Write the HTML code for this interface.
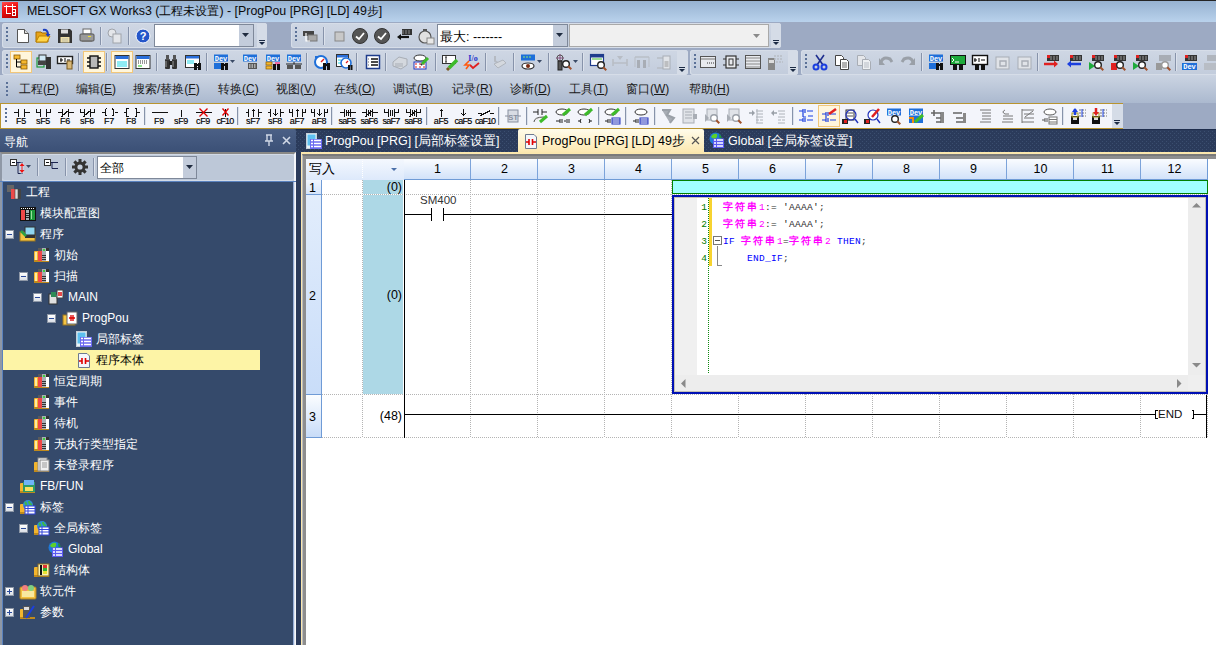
<!DOCTYPE html><html><head><meta charset="utf-8"><style>
*{margin:0;padding:0;box-sizing:border-box}
html,body{width:1216px;height:645px;overflow:hidden}
body{position:relative;background:#9DAAC3;font-family:"Liberation Sans",sans-serif;font-size:12px;color:#000}
.a{position:absolute}
.t{position:absolute;white-space:nowrap;line-height:1}
.band{position:absolute;border-radius:3px;background:linear-gradient(#CFD7E4,#C2CCDC);box-shadow:inset 0 0 0 1px #D6DDE8}
.grip{position:absolute;width:2px;height:14px;background:repeating-linear-gradient(#5B7197 0 2px,transparent 2px 4px)}
.sep{position:absolute;width:2px;height:18px;background:#8793AA;border-right:1px solid #DCE2EC}
.chev{position:absolute;width:10px;border-radius:0 3px 3px 0;background:#D5DCE7}
.chev:before{content:"";position:absolute;left:2px;bottom:7px;width:6px;height:1px;background:#1B2A44}.chev:after{content:"";position:absolute;left:2px;bottom:3px;width:0;height:0;border-left:3px solid transparent;border-right:3px solid transparent;border-top:3px solid #1B2A44}
.hl{position:absolute;width:22px;height:22px;background:#FFF6DC;border:1px solid #F2C77A}
svg{position:absolute;overflow:visible}
.dot{background-image:linear-gradient(90deg,#B4B4B4 50%,#fff 50%);background-size:2px 1px;height:1px}
.vdot{background-image:linear-gradient(#B4B4B4 50%,#fff 50%);background-size:1px 2px;width:1px}
</style></head><body>
<div class="a" style="left:0;top:0;width:1216px;height:22px;background:linear-gradient(#97B2D1,#B9D2EC);border-top:1px solid #252525"></div>
<div class="a" style="left:2px;top:2px;width:16px;height:16px;background:linear-gradient(160deg,#FF5050 0%,#F01010 40%,#B00000 100%);"></div>
<svg style="left:2px;top:2px" width="16" height="16" shape-rendering="crispEdges"><path d="M2 4.5h12M4.5 3v8h4M10.5 2v12M10.5 7.5h3v6h-3M10.5 10.5h3" stroke="#fff" stroke-width="1" fill="none"/></svg>
<div class="t" style="left:27px;top:5px;font-size:12.4px;color:#0A0A0A">MELSOFT GX Works3 (工程未设置) - [ProgPou [PRG] [LD] 49步]</div>
<div class="a" style="left:0;top:22px;width:1216px;height:81px;background:#9DAAC3"></div>
<div class="band" style="left:2px;top:23px;width:265px;height:25px"></div>
<div class="grip" style="left:6px;top:27px"></div>
<div class="band" style="left:291px;top:23px;width:490px;height:25px"></div>
<div class="grip" style="left:295px;top:27px"></div>
<div class="band" style="left:2px;top:50px;width:686px;height:25px"></div>
<div class="grip" style="left:6px;top:54px"></div>
<div class="band" style="left:690px;top:50px;width:108px;height:25px"></div>
<div class="grip" style="left:694px;top:54px"></div>
<div class="band" style="left:801px;top:50px;width:420px;height:25px"></div>
<div class="grip" style="left:805px;top:54px"></div>
<div class="chev" style="left:257px;top:23px;height:25px"></div>
<div class="chev" style="left:771px;top:23px;height:25px"></div>
<div class="chev" style="left:677px;top:50px;height:25px"></div>
<div class="chev" style="left:788px;top:50px;height:25px"></div>
<div class="a" style="left:154px;top:24px;width:100px;height:23px;background:#fff;border:1px solid #7E8899"></div>
<div class="a" style="left:239px;top:25px;width:14px;height:21px;background:#C3CCDB"></div>
<svg style="left:242px;top:33px" width="8" height="5"><path d="M0 0h7l-3.5 4z" fill="#1F2B3F"/></svg>
<div class="a" style="left:437px;top:24px;width:131px;height:23px;background:#fff;border:1px solid #7E8899"></div>
<div class="a" style="left:553px;top:25px;width:14px;height:21px;background:#C3CCDB"></div>
<svg style="left:556px;top:33px" width="8" height="5"><path d="M0 0h7l-3.5 4z" fill="#1F2B3F"/></svg>
<div class="t" style="left:440px;top:31px;font-size:12.5px">最大: -------</div>
<div class="a" style="left:569px;top:24px;width:200px;height:23px;background:#F0F0F0;border:1px solid #A9A9A9"></div>
<svg style="left:753px;top:34px" width="8" height="5"><path d="M0 0h7l-3.5 4z" fill="#8A8A8A"/></svg>
<div class="a" style="left:0;top:75px;width:1216px;height:28px;background:linear-gradient(#CBD4E2,#ABB9CF)"></div>
<div class="grip" style="left:6px;top:82px"></div>
<div class="t" style="left:19px;top:83px;font-size:12px;color:#1A1A1A">工程(<u>P</u>)</div>
<div class="t" style="left:76px;top:83px;font-size:12px;color:#1A1A1A">编辑(<u>E</u>)</div>
<div class="t" style="left:133px;top:83px;font-size:12px;color:#1A1A1A">搜索/替换(<u>F</u>)</div>
<div class="t" style="left:218px;top:83px;font-size:12px;color:#1A1A1A">转换(<u>C</u>)</div>
<div class="t" style="left:276px;top:83px;font-size:12px;color:#1A1A1A">视图(<u>V</u>)</div>
<div class="t" style="left:334px;top:83px;font-size:12px;color:#1A1A1A">在线(<u>O</u>)</div>
<div class="t" style="left:393px;top:83px;font-size:12px;color:#1A1A1A">调试(<u>B</u>)</div>
<div class="t" style="left:452px;top:83px;font-size:12px;color:#1A1A1A">记录(<u>R</u>)</div>
<div class="t" style="left:510px;top:83px;font-size:12px;color:#1A1A1A">诊断(<u>D</u>)</div>
<div class="t" style="left:569px;top:83px;font-size:12px;color:#1A1A1A">工具(<u>T</u>)</div>
<div class="t" style="left:626px;top:83px;font-size:12px;color:#1A1A1A">窗口(<u>W</u>)</div>
<div class="t" style="left:689px;top:83px;font-size:12px;color:#1A1A1A">帮助(<u>H</u>)</div>
<div class="a" style="left:0;top:103px;width:1123px;height:26px;background:#F3F5FB;border:1px solid #B89430"></div>
<div class="a" style="left:1112px;top:104px;width:11px;height:24px;background:#D5DCE7"></div>
<div class="chev" style="left:1112px;top:104px;height:24px;border-radius:0"></div>
<div class="grip" style="left:5px;top:108px"></div>
<svg style="left:15px;top:28px" width="16" height="16" viewBox="0 0 16 16"><path d="M2.5 1.5h7l4 4v9h-11z" fill="#fff" stroke="#555"/><path d="M9.5 1.5v4h4" fill="#ddd" stroke="#555"/></svg>
<svg style="left:35px;top:28px" width="16" height="16" viewBox="0 0 16 16"><path d="M1 4h5l1 1h6v9H1z" fill="#E8A317" stroke="#A66F00"/><path d="M1 14l3-6h11l-3 6z" fill="#FFD54A" stroke="#C08400"/><path d="M8 2q5-1 5 5" stroke="#1B3FBF" stroke-width="2" fill="none"/><path d="M10.5 6h5l-2.5 3z" fill="#1B3FBF"/></svg>
<svg style="left:57px;top:28px" width="16" height="16" viewBox="0 0 16 16"><path d="M1 1h12l2 2v12H1z" fill="#333"/><rect x="4" y="1.5" width="7" height="4" fill="#ddd"/><rect x="3.5" y="9" width="9" height="5.5" fill="#F0E0A8"/><path d="M5 11h6M5 13h6" stroke="#BBA"/></svg>
<svg style="left:79px;top:28px" width="16" height="16" viewBox="0 0 16 16"><rect x="4" y="1" width="8" height="5" fill="#fff" stroke="#666"/><rect x="1" y="6" width="14" height="7" rx="1" fill="#9A9A9A" stroke="#555"/><rect x="9" y="8" width="3" height="1" fill="#EEE030"/><rect x="3" y="12" width="10" height="2" fill="#777"/></svg>
<svg style="left:107px;top:28px" width="16" height="16" viewBox="0 0 16 16"><circle cx="5" cy="5" r="4" fill="#E4E6EA" stroke="#A0A4AA"/><rect x="6" y="6" width="8" height="9" fill="#E4E6EA" stroke="#A0A4AA"/></svg>
<svg style="left:135px;top:28px" width="16" height="16" viewBox="0 0 16 16"><circle cx="8" cy="8" r="7" fill="#2456C9" stroke="#fff" stroke-width="1"/><text x="8" y="12" font-family="Liberation Sans" font-size="11" font-weight="bold" fill="#fff" text-anchor="middle">?</text></svg>
<svg style="left:302px;top:28px" width="16" height="16" viewBox="0 0 16 16"><rect x="1" y="3" width="11" height="5" fill="#444"/><rect x="6" y="7" width="9" height="6" fill="#A8A8A8" stroke="#777"/><path d="M4 5v8h4" stroke="#fff" stroke-width="1.2" fill="none"/></svg>
<svg style="left:331px;top:28px" width="16" height="16" viewBox="0 0 16 16"><rect x="4" y="4" width="9" height="9" fill="#C8C8C8" stroke="#888"/></svg>
<svg style="left:352px;top:28px" width="16" height="16" viewBox="0 0 16 16"><circle cx="8" cy="8" r="7.5" fill="#555" stroke="#333"/><path d="M4 8.5l3 2.5 5-6" stroke="#fff" stroke-width="1.8" fill="none"/></svg>
<svg style="left:374px;top:28px" width="16" height="16" viewBox="0 0 16 16"><circle cx="8" cy="8" r="7.5" fill="#555" stroke="#333"/><path d="M4 8.5l3 2.5 5-6" stroke="#fff" stroke-width="1.8" fill="none"/></svg>
<svg style="left:396px;top:28px" width="16" height="16" viewBox="0 0 16 16"><rect x="6" y="1" width="10" height="6" fill="#333"/><path d="M7 2v4M10 2v4M13 2v4" stroke="#888"/><path d="M13 9H3" stroke="#111" stroke-width="2.2"/><path d="M1 9l4-3v6z" fill="#111"/></svg>
<svg style="left:418px;top:28px" width="16" height="16" viewBox="0 0 16 16"><circle cx="7" cy="9" r="6" fill="#E0E0E0" stroke="#555" stroke-width="1.2"/><rect x="5" y="1" width="4" height="2" fill="#555"/><rect x="9" y="10" width="7" height="6" fill="#E8E8E8" stroke="#888"/></svg>
<div class="sep" style="left:100px;top:27px"></div>
<div class="sep" style="left:128px;top:27px"></div>
<div class="sep" style="left:323px;top:27px"></div>
<div class="hl" style="left:10px;top:51px"></div>
<div class="hl" style="left:83px;top:51px"></div>
<div class="hl" style="left:111px;top:51px"></div>
<svg style="left:13px;top:54px" width="16" height="16" viewBox="0 0 16 16"><rect x="1" y="1" width="6" height="4" fill="#F5B82E" stroke="#8A5A00" stroke-width=".8"/><rect x="8" y="6" width="6" height="4" fill="#F5B82E" stroke="#8A5A00" stroke-width=".8"/><rect x="8" y="11" width="6" height="4" fill="#F5B82E" stroke="#8A5A00" stroke-width=".8"/><path d="M3.5 5v8H8M3.5 8H8" stroke="#000" fill="none"/></svg>
<svg style="left:36px;top:54px" width="16" height="16" viewBox="0 0 16 16"><rect x="1" y="4" width="7" height="9" fill="none" stroke="#1E9A3C" stroke-width="1.2"/><rect x="3" y="1" width="7" height="6" fill="#CFE8F5" stroke="#333"/><rect x="2" y="7" width="10" height="4" fill="#444"/><rect x="10" y="3" width="5" height="12" fill="#333"/></svg>
<svg style="left:57px;top:54px" width="16" height="16" viewBox="0 0 16 16"><rect x="0.5" y="2.5" width="15" height="7" fill="#fff" stroke="#222" stroke-width="1.4"/><path d="M3 6h3M4 4v4M8 4v4M10 6h3" stroke="#000"/><rect x="10" y="7" width="5" height="8" fill="#D8B878" stroke="#7A5A20"/></svg>
<svg style="left:86px;top:54px" width="16" height="16" viewBox="0 0 16 16"><rect x="4" y="2" width="8" height="12" fill="#B8B8B8" stroke="#111" stroke-width="1.4"/><path d="M1 4h3M1 8h3M1 12h3M12 4h3M12 8h3M12 12h3" stroke="#111" stroke-width="1.6"/></svg>
<svg style="left:114px;top:54px" width="16" height="16" viewBox="0 0 16 16"><rect x="1" y="1.5" width="14" height="13" fill="#fff" stroke="#333"/><rect x="1.5" y="2" width="13" height="3" fill="#2A6FDB"/><path d="M3 8h10M3 10h10M3 12h10" stroke="#20D8E8"/></svg>
<svg style="left:135px;top:54px" width="16" height="16" viewBox="0 0 16 16"><rect x="1" y="1.5" width="14" height="13" fill="#fff" stroke="#333"/><rect x="1.5" y="2" width="13" height="3" fill="#2A6FDB"/><path d="M3 7h10M3 9h10" stroke="#333" stroke-dasharray="1 1"/><path d="M3 12h4" stroke="#22CC22"/></svg>
<svg style="left:163px;top:54px" width="16" height="16" viewBox="0 0 16 16"><rect x="2" y="5" width="5" height="10" rx="1" fill="#333"/><rect x="9" y="5" width="5" height="10" rx="1" fill="#333"/><rect x="6" y="7" width="4" height="4" fill="#222"/><rect x="3" y="1" width="3" height="5" fill="#555"/><rect x="10" y="1" width="3" height="5" fill="#555"/><path d="M3 7v6M10 7v6" stroke="#999"/></svg>
<svg style="left:185px;top:54px" width="16" height="16" viewBox="0 0 16 16"><rect x="0.5" y="1.5" width="14" height="12" fill="#fff" stroke="#333"/><rect x="1" y="2" width="13" height="2.5" fill="#2A6FDB"/><path d="M2 7h7M2 9h7" stroke="#20D8E8"/><rect x="9" y="9" width="3" height="7" fill="#111"/><rect x="13" y="9" width="3" height="7" fill="#111"/><rect x="11" y="10" width="3" height="2" fill="#111"/></svg>
<svg style="left:213px;top:54px" width="16" height="16" viewBox="0 0 16 16"><rect x="1" y="0.5" width="14" height="7" fill="#1E6FD9"/><text x="8" y="6.6" font-family="Liberation Mono" font-size="7" font-weight="bold" fill="#fff" text-anchor="middle">Dev</text><rect x="1" y="9" width="7" height="6" fill="#1E6FD9"/><rect x="8" y="9" width="3" height="7" fill="#111"/><rect x="12" y="9" width="3" height="7" fill="#111"/><rect x="10" y="10" width="3" height="2" fill="#111"/></svg>
<svg style="left:242px;top:54px" width="16" height="16" viewBox="0 0 16 16"><rect x="1" y="0.5" width="14" height="7" fill="#1E6FD9"/><text x="8" y="6.6" font-family="Liberation Mono" font-size="7" font-weight="bold" fill="#fff" text-anchor="middle">Dev</text><rect x="6" y="9" width="9" height="6" fill="#555"/><path d="M7 11h7M7 13h7" stroke="#fff" stroke-dasharray="1.5 1"/></svg>
<svg style="left:265px;top:54px" width="16" height="16" viewBox="0 0 16 16"><rect x="1" y="0.5" width="14" height="7" fill="#1E6FD9"/><text x="8" y="6.6" font-family="Liberation Mono" font-size="7" font-weight="bold" fill="#fff" text-anchor="middle">Dev</text><rect x="1" y="8" width="6" height="3" fill="#F5B82E" stroke="#8A5A00" stroke-width=".7"/><rect x="1" y="12" width="6" height="3" fill="#F5B82E" stroke="#8A5A00" stroke-width=".7"/><rect x="10" y="8" width="5" height="3" fill="#F06AA0"/><rect x="8" y="10" width="3" height="6" fill="#111"/><rect x="12" y="10" width="3" height="6" fill="#111"/></svg>
<svg style="left:286px;top:54px" width="16" height="16" viewBox="0 0 16 16"><rect x="1" y="0.5" width="14" height="7" fill="#1E6FD9"/><text x="8" y="6.6" font-family="Liberation Mono" font-size="7" font-weight="bold" fill="#fff" text-anchor="middle">Dev</text><path d="M0 10h16M8 8v2" stroke="#222"/><rect x="1" y="11" width="6" height="4" fill="#555"/><rect x="9" y="11" width="6" height="4" fill="#555"/></svg>
<svg style="left:314px;top:54px" width="16" height="16" viewBox="0 0 16 16"><circle cx="7" cy="8" r="6" fill="#fff" stroke="#1E6FD9" stroke-width="2"/><path d="M7 8l3-3" stroke="#E02020" stroke-width="1.5"/><rect x="1" y="2" width="3" height="2" fill="#1E6FD9"/><rect x="9" y="9" width="3" height="7" fill="#111"/><rect x="13" y="9" width="3" height="7" fill="#111"/><rect x="11" y="10" width="3" height="2" fill="#111"/></svg>
<svg style="left:336px;top:54px" width="16" height="16" viewBox="0 0 16 16"><rect x="0.5" y="0.5" width="12" height="12" fill="#fff" stroke="#333"/><rect x="1" y="1" width="11" height="2.5" fill="#2A6FDB"/><path d="M2 6h3M2 9h3" stroke="#20D8E8"/><circle cx="10" cy="9" r="5" fill="#fff" stroke="#1E6FD9" stroke-width="1.6"/><path d="M10 9l2-2" stroke="#E02020" stroke-width="1.3"/><rect x="12" y="11" width="2" height="5" fill="#111"/><rect x="14.5" y="11" width="2" height="5" fill="#111"/></svg>
<svg style="left:365px;top:54px" width="16" height="16" viewBox="0 0 16 16"><rect x="1.5" y="1.5" width="13" height="13" fill="#fff" stroke="#1E3C8C" stroke-width="1.5"/><path d="M6 5h7M6 8h7M6 11h7" stroke="#111" stroke-width="1.4"/><path d="M3 5h1M3 8h1M3 11h1" stroke="#999" stroke-width="1.4"/></svg>
<svg style="left:392px;top:54px" width="16" height="16" viewBox="0 0 16 16"><path d="M1 8l6-5 8 2v6l-6 4-8-3z" fill="#D4D8DE" stroke="#A8ADB5"/><path d="M3 10h8M3 12h8" stroke="#A8ADB5"/></svg>
<svg style="left:413px;top:54px" width="16" height="16" viewBox="0 0 16 16"><ellipse cx="7" cy="4" rx="6" ry="3" fill="#fff" stroke="#333"/><rect x="1" y="8" width="12" height="7" fill="#fff" stroke="#2233BB"/><path d="M2 10h10M2 13h10" stroke="#E02020" stroke-dasharray="2 2"/><path d="M9 10l6-6" stroke="#3DBB2A" stroke-width="3"/><path d="M8 11l1-1" stroke="#333" stroke-width="2"/></svg>
<svg style="left:442px;top:54px" width="16" height="16" viewBox="0 0 16 16"><rect x="0.5" y="1.5" width="13" height="8" fill="#fff" stroke="#333"/><path d="M4 3v5M3 3h2M3 8h2" stroke="#333"/><path d="M7 14l8-8" stroke="#3DBB2A" stroke-width="3.5"/><path d="M5 16l2-2" stroke="#7A5A20" stroke-width="3"/></svg>
<svg style="left:464px;top:54px" width="16" height="16" viewBox="0 0 16 16"><text x="9" y="7" font-family="Liberation Serif" font-size="8" font-weight="bold" fill="#1B2FCC" text-anchor="middle">I/o</text><path d="M5 7l-4 4h4l-3 4" stroke="#FF5A10" stroke-width="1.6" fill="none"/><path d="M6 11l3 3 6-5" stroke="#E02020" stroke-width="1.8" fill="none"/></svg>
<svg style="left:491px;top:54px" width="16" height="16" viewBox="0 0 16 16"><path d="M4 2v5l3 2" stroke="#B5BAC2" stroke-width="2" fill="none"/><path d="M3 10l4 4 8-5-3-3z" fill="#D4D8DE" stroke="#B0B5BD"/></svg>
<svg style="left:520px;top:54px" width="16" height="16" viewBox="0 0 16 16"><rect x="1" y="0.5" width="14" height="6" fill="#1E6FD9"/><path d="M3 3h8" stroke="#8FE870" stroke-dasharray="2 1"/><ellipse cx="8" cy="12" rx="6" ry="3" fill="#fff" stroke="#333" stroke-width="1.2"/><circle cx="8" cy="12" r="2" fill="#7A2A10"/></svg>
<svg style="left:555px;top:54px" width="16" height="16" viewBox="0 0 16 16"><circle cx="5" cy="4" r="3" fill="none" stroke="#555"/><path d="M1 4h8M5 0v8" stroke="#7A3A6A" stroke-width=".8"/><rect x="3" y="7" width="4" height="9" fill="#555" stroke="#222"/><circle cx="11" cy="10" r="3.3" fill="#fff" stroke="#222" stroke-width="1.4"/><path d="M13.3 12.3l3 3" stroke="#A0522D" stroke-width="2"/></svg>
<svg style="left:590px;top:54px" width="16" height="16" viewBox="0 0 16 16"><rect x="0.5" y="0.5" width="13" height="11" fill="#fff" stroke="#1E3C8C" stroke-width="1.2"/><rect x="1" y="1" width="12" height="2.5" fill="#1E3C8C"/><path d="M2 5h10" stroke="#3DBB2A"/><circle cx="11" cy="11" r="3.3" fill="#fff" stroke="#222" stroke-width="1.4"/><path d="M13.3 13.3l3 3" stroke="#A0522D" stroke-width="2"/></svg>
<svg style="left:612px;top:54px" width="16" height="16" viewBox="0 0 16 16"><path d="M1 5v7M15 5v7M1 9h14" stroke="#B8BDC5" stroke-width="1.6"/><path d="M5 2h6l-3 4z" fill="#B8BDC5"/></svg>
<svg style="left:634px;top:54px" width="16" height="16" viewBox="0 0 16 16"><path d="M1 3h14" stroke="#B8BDC5" stroke-width="1.4"/><rect x="3" y="6" width="3" height="8" fill="#A8ADB5"/><rect x="9" y="6" width="3" height="8" fill="#A8ADB5"/><path d="M1 3v10M15 3v10" stroke="#B8BDC5"/></svg>
<svg style="left:656px;top:54px" width="16" height="16" viewBox="0 0 16 16"><path d="M1 4h7v10H1" fill="none" stroke="#B8BDC5" stroke-width="1.4"/><rect x="7" y="2" width="7" height="13" fill="#E0E3E8" stroke="#A8ADB5"/><path d="M8.5 8h4M8.5 10h4M8.5 12h4" stroke="#999"/></svg>
<svg style="left:700px;top:54px" width="16" height="16" viewBox="0 0 16 16"><rect x="0.5" y="2.5" width="15" height="11" fill="#E8EAEE" stroke="#555"/><path d="M1 5h14" stroke="#777"/><path d="M7 9h7" stroke="#333" stroke-dasharray="1 1"/></svg>
<svg style="left:723px;top:54px" width="16" height="16" viewBox="0 0 16 16"><path d="M0 5h3M0 11h3M13 5h3M13 11h3" stroke="#333" stroke-width="1.2"/><rect x="3" y="2" width="10" height="12" fill="#E8EAEE" stroke="#333" stroke-width="1.2"/><rect x="6" y="5" width="4" height="6" fill="none" stroke="#333"/></svg>
<svg style="left:745px;top:54px" width="16" height="16" viewBox="0 0 16 16"><rect x="0.5" y="1.5" width="15" height="13" fill="#E8EAEE" stroke="#555"/><path d="M1 4h14M1 7h14M1 10h14M1 13h14" stroke="#888"/></svg>
<svg style="left:767px;top:54px" width="16" height="16" viewBox="0 0 16 16"><rect x="1" y="4" width="7" height="12" fill="#888"/><rect x="2" y="6" width="5" height="3" fill="#ddd"/><path d="M7 2h9M7 5h9M9 8h7" stroke="#B8BDC5" stroke-dasharray="2 1" stroke-width="1.4"/></svg>
<svg style="left:812px;top:54px" width="16" height="16" viewBox="0 0 16 16"><path d="M4 1l7 10M12 1L5 11" stroke="#1F2F8F" stroke-width="1.6"/><circle cx="4" cy="13" r="2.5" fill="none" stroke="#1B3FDF" stroke-width="2"/><circle cx="12" cy="13" r="2.5" fill="none" stroke="#1B3FDF" stroke-width="2"/></svg>
<svg style="left:834px;top:54px" width="16" height="16" viewBox="0 0 16 16"><path d="M1.5 1.5h6l2 2v8h-8z" fill="#fff" stroke="#444"/><path d="M6.5 5.5h6l2 2v8h-8z" fill="#fff" stroke="#444"/><path d="M8 9h5M8 11h5M8 13h5" stroke="#666"/></svg>
<svg style="left:856px;top:54px" width="16" height="16" viewBox="0 0 16 16"><path d="M1.5 1.5h6l2 2v8h-8z" fill="#E4E6EA" stroke="#A8ADB5"/><path d="M6.5 5.5h6l2 2v8h-8z" fill="#EEF0F3" stroke="#A8ADB5"/><path d="M8 9h5M8 11h5M8 13h5" stroke="#B8BDC5"/></svg>
<svg style="left:878px;top:54px" width="16" height="16" viewBox="0 0 16 16"><path d="M3 8q2-6 9-3l2 3" stroke="#9AA0A8" stroke-width="3" fill="none"/><path d="M1 4v7h6z" fill="#9AA0A8"/></svg>
<svg style="left:900px;top:54px" width="16" height="16" viewBox="0 0 16 16"><path d="M13 8q-2-6-9-3l-2 3" stroke="#9AA0A8" stroke-width="3" fill="none"/><path d="M15 4v7H9z" fill="#9AA0A8"/></svg>
<svg style="left:928px;top:54px" width="16" height="16" viewBox="0 0 16 16"><rect x="1" y="0.5" width="14" height="7" fill="#1E6FD9"/><text x="8" y="6.6" font-family="Liberation Mono" font-size="7" font-weight="bold" fill="#fff" text-anchor="middle">Dev</text><rect x="1" y="9" width="7" height="6" fill="#1E6FD9"/><rect x="8" y="9" width="3" height="7" fill="#111"/><rect x="12" y="9" width="3" height="7" fill="#111"/><rect x="10" y="10" width="3" height="2" fill="#111"/></svg>
<svg style="left:950px;top:54px" width="16" height="16" viewBox="0 0 16 16"><rect x="0.5" y="1.5" width="15" height="9" fill="#1EAA3C" stroke="#111"/><path d="M2 4l2 2-2 2M5 8h4" stroke="#fff" fill="none"/><rect x="3" y="10" width="4" height="6" fill="#111"/><rect x="9" y="10" width="4" height="6" fill="#111"/></svg>
<svg style="left:972px;top:54px" width="16" height="16" viewBox="0 0 16 16"><rect x="0.5" y="1.5" width="15" height="9" fill="#fff" stroke="#111" stroke-width="1.4"/><path d="M2 6h3M3 4v4M7 4v4M9 6h4" stroke="#000"/><rect x="3" y="10" width="4" height="6" fill="#111"/><rect x="9" y="10" width="4" height="6" fill="#111"/></svg>
<svg style="left:995px;top:54px" width="16" height="16" viewBox="0 0 16 16"><rect x="1" y="3" width="13" height="12" fill="#E0E3E8" stroke="#A8ADB5"/><path d="M5 7h6v5H5z" fill="none" stroke="#A8ADB5" stroke-width="1.4"/></svg>
<svg style="left:1017px;top:54px" width="16" height="16" viewBox="0 0 16 16"><rect x="1" y="3" width="13" height="12" fill="#E0E3E8" stroke="#A8ADB5"/><path d="M5 7h6v5H5z" fill="none" stroke="#A8ADB5" stroke-width="1.4"/></svg>
<svg style="left:1043px;top:54px" width="16" height="16" viewBox="0 0 16 16"><rect x="4" y="1" width="12" height="6" fill="#333"/><path d="M8 2v4M11 2v4M14 2v4" stroke="#999"/><rect x="4" y="1" width="3" height="3" fill="#E02020"/><path d="M1 10h11" stroke="#E02020" stroke-width="2.5"/><path d="M15 10l-4-3.5v7z" fill="#E02020"/></svg>
<svg style="left:1066px;top:54px" width="16" height="16" viewBox="0 0 16 16"><rect x="4" y="1" width="12" height="6" fill="#333"/><path d="M8 2v4M11 2v4M14 2v4" stroke="#999"/><rect x="4" y="1" width="3" height="3" fill="#E02020"/><path d="M4 10h11" stroke="#1B3FDF" stroke-width="2.5"/><path d="M1 10l4-3.5v7z" fill="#1B3FDF"/></svg>
<svg style="left:1088px;top:54px" width="16" height="16" viewBox="0 0 16 16"><rect x="4" y="1" width="12" height="6" fill="#333"/><path d="M8 2v4M11 2v4M14 2v4" stroke="#999"/><rect x="4" y="1" width="3" height="3" fill="#E02020"/><path d="M1 8v8l6-4z" fill="#1EAA3C"/><circle cx="10" cy="11" r="3.3" fill="#fff" stroke="#222" stroke-width="1.4"/><path d="M12.3 13.3l3 3" stroke="#A0522D" stroke-width="2"/></svg>
<svg style="left:1110px;top:54px" width="16" height="16" viewBox="0 0 16 16"><rect x="4" y="1" width="12" height="6" fill="#333"/><path d="M8 2v4M11 2v4M14 2v4" stroke="#999"/><rect x="4" y="1" width="3" height="3" fill="#E02020"/><rect x="1" y="9" width="6" height="7" fill="#E02020"/><circle cx="10" cy="11" r="3.3" fill="#fff" stroke="#222" stroke-width="1.4"/><path d="M12.3 13.3l3 3" stroke="#A0522D" stroke-width="2"/></svg>
<svg style="left:1132px;top:54px" width="16" height="16" viewBox="0 0 16 16"><rect x="4" y="1" width="12" height="6" fill="#333"/><path d="M8 2v4M11 2v4M14 2v4" stroke="#999"/><rect x="4" y="1" width="3" height="3" fill="#E02020"/><path d="M1 8v8l6-4z" fill="#1EAA3C"/><circle cx="10" cy="11" r="3.3" fill="#fff" stroke="#222" stroke-width="1.4"/><path d="M12.3 13.3l3 3" stroke="#A0522D" stroke-width="2"/></svg>
<svg style="left:1155px;top:54px" width="16" height="16" viewBox="0 0 16 16"><rect x="4" y="1" width="12" height="6" fill="#A8ADB5"/><rect x="1" y="9" width="6" height="7" fill="#999"/><circle cx="10" cy="11" r="3.3" fill="#fff" stroke="#999" stroke-width="1.4"/><path d="M12.3 13.3l3 3" stroke="#A0522D" stroke-width="2"/></svg>
<svg style="left:1181px;top:54px" width="16" height="16" viewBox="0 0 16 16"><rect x="4" y="1" width="12" height="6" fill="#333"/><path d="M8 2v4M11 2v4M14 2v4" stroke="#999"/><rect x="4" y="1" width="3" height="3" fill="#E02020"/><rect x="1" y="9" width="15" height="7" fill="#1E6FD9"/><text x="8.5" y="15" font-family="Liberation Mono" font-size="7" font-weight="bold" fill="#fff" text-anchor="middle">Dev</text></svg>
<svg style="left:1203px;top:54px" width="16" height="16" viewBox="0 0 16 16"><rect x="4" y="1" width="12" height="6" fill="#B0B5BD"/><rect x="1" y="9" width="15" height="7" fill="#B8BDC5"/></svg>
<svg style="left:230px;top:60px" width="6" height="4"><path d="M0 0h5l-2.5 3z" fill="#3A4A66"/></svg>
<svg style="left:537px;top:60px" width="6" height="4"><path d="M0 0h5l-2.5 3z" fill="#3A4A66"/></svg>
<svg style="left:573px;top:60px" width="6" height="4"><path d="M0 0h5l-2.5 3z" fill="#3A4A66"/></svg>
<div class="sep" style="left:78px;top:53px"></div>
<div class="sep" style="left:106px;top:53px"></div>
<div class="sep" style="left:156px;top:53px"></div>
<div class="sep" style="left:206px;top:53px"></div>
<div class="sep" style="left:306px;top:53px"></div>
<div class="sep" style="left:356px;top:53px"></div>
<div class="sep" style="left:385px;top:53px"></div>
<div class="sep" style="left:435px;top:53px"></div>
<div class="sep" style="left:485px;top:53px"></div>
<div class="sep" style="left:513px;top:53px"></div>
<div class="sep" style="left:548px;top:53px"></div>
<div class="sep" style="left:582px;top:53px"></div>
<div class="sep" style="left:921px;top:53px"></div>
<div class="sep" style="left:1037px;top:53px"></div>
<div class="sep" style="left:1175px;top:53px"></div>
<svg style="left:13px;top:108px" width="17" height="9" viewBox="-0.5 -0.5 17 9" shape-rendering="crispEdges"><path d="M0 4h5M5 0v8M11 0v8M11 4h5" stroke="#111" stroke-width="1" fill="none"/></svg>
<div class="t" style="left:9px;top:117px;width:24px;text-align:center;font-size:9px;color:#000;letter-spacing:-.3px;-webkit-text-stroke:.15px #000">F5</div>
<svg style="left:35px;top:108px" width="17" height="9" viewBox="-0.5 -0.5 17 9" shape-rendering="crispEdges"><path d="M1 0v4h4M5 0v8M11 0v8M11 4h4v-4" stroke="#111" stroke-width="1" fill="none"/></svg>
<div class="t" style="left:31px;top:117px;width:24px;text-align:center;font-size:9px;color:#000;letter-spacing:-.3px;-webkit-text-stroke:.15px #000">sF5</div>
<svg style="left:57px;top:108px" width="17" height="9" viewBox="-0.5 -0.5 17 9" shape-rendering="crispEdges"><path d="M0 4h5M5 0v8M11 0v8M11 4h5M4 8l8-7" stroke="#111" stroke-width="1" fill="none"/></svg>
<div class="t" style="left:53px;top:117px;width:24px;text-align:center;font-size:9px;color:#000;letter-spacing:-.3px;-webkit-text-stroke:.15px #000">F6</div>
<svg style="left:79px;top:108px" width="17" height="9" viewBox="-0.5 -0.5 17 9" shape-rendering="crispEdges"><path d="M1 0v4h4M5 0v8M11 0v8M11 4h4v-4M4 8l8-7" stroke="#111" stroke-width="1" fill="none"/></svg>
<div class="t" style="left:75px;top:117px;width:24px;text-align:center;font-size:9px;color:#000;letter-spacing:-.3px;-webkit-text-stroke:.15px #000">sF6</div>
<svg style="left:101px;top:108px" width="17" height="9" viewBox="-0.5 -0.5 17 9" shape-rendering="crispEdges"><path d="M0 4h3M13 4h3M5 0q-3 4 0 8M11 0q3 4 0 8" stroke="#111" stroke-width="1" fill="none"/></svg>
<div class="t" style="left:97px;top:117px;width:24px;text-align:center;font-size:9px;color:#000;letter-spacing:-.3px;-webkit-text-stroke:.15px #000">F7</div>
<svg style="left:123px;top:108px" width="17" height="9" viewBox="-0.5 -0.5 17 9" shape-rendering="crispEdges"><path d="M0 4h3M13 4h3M5 0h-2v8h2M11 0h2v8h-2" stroke="#111" stroke-width="1" fill="none"/></svg>
<div class="t" style="left:119px;top:117px;width:24px;text-align:center;font-size:9px;color:#000;letter-spacing:-.3px;-webkit-text-stroke:.15px #000">F8</div>
<svg style="left:151px;top:108px" width="17" height="9" viewBox="-0.5 -0.5 17 9" shape-rendering="crispEdges"><path d="M0 4h16" stroke="#111" stroke-width="1" fill="none"/></svg>
<div class="t" style="left:147px;top:117px;width:24px;text-align:center;font-size:9px;color:#000;letter-spacing:-.3px;-webkit-text-stroke:.15px #000">F9</div>
<svg style="left:173px;top:108px" width="17" height="9" viewBox="-0.5 -0.5 17 9" shape-rendering="crispEdges"><path d="M8 1v7" stroke="#111" stroke-width="1" fill="none"/></svg>
<div class="t" style="left:169px;top:117px;width:24px;text-align:center;font-size:9px;color:#000;letter-spacing:-.3px;-webkit-text-stroke:.15px #000">sF9</div>
<svg style="left:195px;top:108px" width="17" height="9" viewBox="-0.5 -0.5 17 9" shape-rendering="crispEdges"><path d="M0 4h16" stroke="#111" stroke-width="1" fill="none"/><path d="M4 0l8 8M12 0L4 8" stroke="#E00000" stroke-width="1.3" shape-rendering="auto"/></svg>
<div class="t" style="left:191px;top:117px;width:24px;text-align:center;font-size:9px;color:#000;letter-spacing:-.3px;-webkit-text-stroke:.15px #000">cF9</div>
<svg style="left:217px;top:108px" width="17" height="9" viewBox="-0.5 -0.5 17 9" shape-rendering="crispEdges"><path d="M8 0v8" stroke="#111" stroke-width="1" fill="none"/><path d="M5 0l6 7M11 0L5 7" stroke="#E00000" stroke-width="1.3" shape-rendering="auto"/></svg>
<div class="t" style="left:213px;top:117px;width:24px;text-align:center;font-size:9px;color:#000;letter-spacing:-.7px;-webkit-text-stroke:.15px #000">cF10</div>
<svg style="left:245px;top:108px" width="17" height="9" viewBox="-0.5 -0.5 17 9" shape-rendering="crispEdges"><path d="M0 4h3M3 0v8M13 0v8M13 4h3M8 8V1M6 3l2-2 2 2" stroke="#111" stroke-width="1" fill="none"/></svg>
<div class="t" style="left:241px;top:117px;width:24px;text-align:center;font-size:9px;color:#000;letter-spacing:-.3px;-webkit-text-stroke:.15px #000">sF7</div>
<svg style="left:267px;top:108px" width="17" height="9" viewBox="-0.5 -0.5 17 9" shape-rendering="crispEdges"><path d="M0 4h3M3 0v8M13 0v8M13 4h3M8 0v7M6 5l2 2 2-2" stroke="#111" stroke-width="1" fill="none"/></svg>
<div class="t" style="left:263px;top:117px;width:24px;text-align:center;font-size:9px;color:#000;letter-spacing:-.3px;-webkit-text-stroke:.15px #000">sF8</div>
<svg style="left:289px;top:108px" width="17" height="9" viewBox="-0.5 -0.5 17 9" shape-rendering="crispEdges"><path d="M0 0v4h3M3 0v8M13 0v8M13 4h3v-4M8 8V1M6 3l2-2 2 2" stroke="#111" stroke-width="1" fill="none"/></svg>
<div class="t" style="left:285px;top:117px;width:24px;text-align:center;font-size:9px;color:#000;letter-spacing:-.3px;-webkit-text-stroke:.15px #000">aF7</div>
<svg style="left:311px;top:108px" width="17" height="9" viewBox="-0.5 -0.5 17 9" shape-rendering="crispEdges"><path d="M0 0v4h3M3 0v8M13 0v8M13 4h3v-4M8 0v7M6 5l2 2 2-2" stroke="#111" stroke-width="1" fill="none"/></svg>
<div class="t" style="left:307px;top:117px;width:24px;text-align:center;font-size:9px;color:#000;letter-spacing:-.3px;-webkit-text-stroke:.15px #000">aF8</div>
<svg style="left:339px;top:108px" width="17" height="9" viewBox="-0.5 -0.5 17 9" shape-rendering="crispEdges"><path d="M0 4h5M5 0v8M11 0v8M11 4h5M7 1v6M9 1v6M6 4h4" stroke="#111" stroke-width="1" fill="none"/></svg>
<div class="t" style="left:335px;top:117px;width:24px;text-align:center;font-size:9px;color:#000;letter-spacing:-.7px;-webkit-text-stroke:.15px #000">saF5</div>
<svg style="left:361px;top:108px" width="17" height="9" viewBox="-0.5 -0.5 17 9" shape-rendering="crispEdges"><path d="M0 4h5M5 0v8M11 0v8M11 4h5M7 1v6M9 1v6M4 8l8-7" stroke="#111" stroke-width="1" fill="none"/></svg>
<div class="t" style="left:357px;top:117px;width:24px;text-align:center;font-size:9px;color:#000;letter-spacing:-.7px;-webkit-text-stroke:.15px #000">saF6</div>
<svg style="left:383px;top:108px" width="17" height="9" viewBox="-0.5 -0.5 17 9" shape-rendering="crispEdges"><path d="M1 0v4h4M5 0v8M11 0v8M11 4h4v-4M7 1v6M9 1v6" stroke="#111" stroke-width="1" fill="none"/></svg>
<div class="t" style="left:379px;top:117px;width:24px;text-align:center;font-size:9px;color:#000;letter-spacing:-.7px;-webkit-text-stroke:.15px #000">saF7</div>
<svg style="left:405px;top:108px" width="17" height="9" viewBox="-0.5 -0.5 17 9" shape-rendering="crispEdges"><path d="M1 0v4h4M5 0v8M11 0v8M11 4h4v-4M7 1v6M9 1v6M4 8l8-7" stroke="#111" stroke-width="1" fill="none"/></svg>
<div class="t" style="left:401px;top:117px;width:24px;text-align:center;font-size:9px;color:#000;letter-spacing:-.7px;-webkit-text-stroke:.15px #000">saF8</div>
<svg style="left:433px;top:108px" width="17" height="9" viewBox="-0.5 -0.5 17 9" shape-rendering="crispEdges"><path d="M8 8V1M6 3l2-2 2 2" stroke="#111" stroke-width="1" fill="none"/></svg>
<div class="t" style="left:429px;top:117px;width:24px;text-align:center;font-size:9px;color:#000;letter-spacing:-.3px;-webkit-text-stroke:.15px #000">aF5</div>
<svg style="left:455px;top:108px" width="17" height="9" viewBox="-0.5 -0.5 17 9" shape-rendering="crispEdges"><path d="M8 0v7M6 5l2 2 2-2" stroke="#111" stroke-width="1" fill="none"/></svg>
<div class="t" style="left:451px;top:117px;width:24px;text-align:center;font-size:9px;color:#000;letter-spacing:-.7px;-webkit-text-stroke:.15px #000">caF5</div>
<svg style="left:477px;top:108px" width="17" height="9" viewBox="-0.5 -0.5 17 9" shape-rendering="crispEdges"><path d="M0 5h4M12 5h4M3 7l10-5" stroke="#111" stroke-width="1" fill="none"/></svg>
<div class="t" style="left:473px;top:117px;width:24px;text-align:center;font-size:9px;color:#000;letter-spacing:-1px;-webkit-text-stroke:.15px #000">caF10</div>
<div class="sep" style="left:144px;top:107px"></div>
<div class="sep" style="left:237px;top:107px"></div>
<div class="sep" style="left:331px;top:107px"></div>
<div class="sep" style="left:426px;top:107px"></div>
<div class="sep" style="left:498px;top:107px"></div>
<div class="sep" style="left:526px;top:107px"></div>
<div class="sep" style="left:598px;top:107px"></div>
<div class="sep" style="left:625px;top:107px"></div>
<div class="sep" style="left:654px;top:107px"></div>
<div class="sep" style="left:792px;top:107px"></div>
<div class="sep" style="left:1062px;top:107px"></div>
<div class="hl" style="left:818px;top:105px"></div>
<svg style="left:505px;top:108px" width="16" height="16" viewBox="0 0 16 16"><rect x="3" y="2" width="10" height="12" fill="#D8DCE4" stroke="#8890A0"/><path d="M0 8h3M13 8h3" stroke="#8890A0"/><text x="8" y="12" font-family="Liberation Sans" font-size="8" font-weight="bold" fill="#8890A0" text-anchor="middle">ST</text></svg>
<svg style="left:532px;top:108px" width="16" height="16" viewBox="0 0 16 16"><path d="M1 4h5M6 1v6M10 1v6M10 4h5" stroke="#222"/><path d="M2 14q0-5 10-5" stroke="#555" fill="#EEE"/><path d="M8 14l7-6" stroke="#3DBB2A" stroke-width="3"/></svg>
<svg style="left:555px;top:108px" width="16" height="16" viewBox="0 0 16 16"><ellipse cx="7" cy="4" rx="6" ry="3" fill="#fff" stroke="#333"/><path d="M8 7l7-6" stroke="#3DBB2A" stroke-width="3"/><path d="M1 13h4M5 11v4M7 11v4M9 13h2M12 11v4M14 11v4" stroke="#222"/></svg>
<svg style="left:577px;top:108px" width="16" height="16" viewBox="0 0 16 16"><ellipse cx="7" cy="4" rx="6" ry="3" fill="#fff" stroke="#333"/><path d="M8 7l7-6" stroke="#3DBB2A" stroke-width="3"/><path d="M1 13h3M4 11q-2 2 0 4M12 11q2 2 0 4M12 13h3" stroke="#222" fill="none"/></svg>
<svg style="left:604px;top:108px" width="16" height="16" viewBox="0 0 16 16"><ellipse cx="7" cy="4" rx="6" ry="3" fill="#fff" stroke="#333"/><path d="M8 7l7-6" stroke="#3DBB2A" stroke-width="3"/><path d="M1 13h3M4 11v4M6 11v4" stroke="#222"/><rect x="8" y="10" width="8" height="6" fill="#fff" stroke="#2233BB"/><path d="M8 12h8M8 14h8" stroke="#2233BB"/></svg>
<svg style="left:632px;top:108px" width="16" height="16" viewBox="0 0 16 16"><ellipse cx="9" cy="4" rx="6" ry="3" fill="#fff" stroke="#333"/><path d="M1 13h3M4 11v4M6 11v4" stroke="#222"/><rect x="8" y="10" width="8" height="6" fill="#fff" stroke="#2233BB"/><path d="M8 12h8M8 14h8" stroke="#2233BB"/></svg>
<svg style="left:660px;top:108px" width="16" height="16" viewBox="0 0 16 16"><path d="M2 2h8l-3 5 7 3-4 5" fill="#A8ADB5" stroke="#9AA0A8" stroke-width="2"/></svg>
<svg style="left:682px;top:108px" width="16" height="16" viewBox="0 0 16 16"><rect x="1" y="1" width="11" height="14" fill="#E0E3E8" stroke="#A8ADB5"/><path d="M3 4h7M3 7h7M3 10h7" stroke="#A8ADB5"/><rect x="11" y="6" width="4" height="5" fill="#A8ADB5"/></svg>
<svg style="left:704px;top:108px" width="16" height="16" viewBox="0 0 16 16"><rect x="3" y="1" width="10" height="11" fill="#E0E3E8" stroke="#A8ADB5"/><path d="M1 6l4 4-4 4z" fill="#A8ADB5"/><circle cx="10" cy="10" r="3.3" fill="#fff" stroke="#9AA0A8" stroke-width="1.4"/><path d="M12.3 12.3l3 3" stroke="#A0522D" stroke-width="2"/></svg>
<svg style="left:726px;top:108px" width="16" height="16" viewBox="0 0 16 16"><rect x="3" y="1" width="10" height="11" fill="#E0E3E8" stroke="#A8ADB5"/><path d="M1 6l4 4-4 4z" fill="#A8ADB5"/><circle cx="10" cy="10" r="3.3" fill="#fff" stroke="#9AA0A8" stroke-width="1.4"/><path d="M12.3 12.3l3 3" stroke="#A0522D" stroke-width="2"/></svg>
<svg style="left:748px;top:108px" width="16" height="16" viewBox="0 0 16 16"><path d="M1 5h4" stroke="#9AA0A8" stroke-width="1.5"/><path d="M4 2l3 3-3 3z" fill="#9AA0A8"/><path d="M8 3h7M9 6h6M8 9h7M8 12h3M12 12h3M8 15h7" stroke="#AEB3BA"/><path d="M9 1v14" stroke="#AEB3BA"/></svg>
<svg style="left:770px;top:108px" width="16" height="16" viewBox="0 0 16 16"><path d="M3 5h4" stroke="#9AA0A8" stroke-width="1.5"/><path d="M4 2L1 5l3 3z" fill="#9AA0A8"/><path d="M8 3h7M9 6h6M8 9h7M8 12h3M12 12h3M8 15h7" stroke="#AEB3BA"/></svg>
<svg style="left:798px;top:108px" width="16" height="16" viewBox="0 0 16 16"><path d="M1 3h4M5 1v4M7 1v4M9 3h6M5 3v6M5 9h3M10 8h5M1 12h4M5 10v4M7 10v4M9 12h6" stroke="#1B3FDF" stroke-width="1.2"/></svg>
<svg style="left:821px;top:108px" width="16" height="16" viewBox="0 0 16 16"><path d="M1 6h4M5 4v4M7 4v4M9 6h6M1 12h4M5 10v4M7 10v4M9 12h6M5 6v6" stroke="#1B3FDF" stroke-width="1.2"/><path d="M8 6l7-5" stroke="#E02020" stroke-width="2.5"/></svg>
<svg style="left:842px;top:108px" width="16" height="16" viewBox="0 0 16 16"><rect x="4" y="2" width="8" height="10" fill="#fff" stroke="#333"/><path d="M5 5h6M5 8h6" stroke="#555"/><circle cx="9" cy="7" r="5" fill="none" stroke="#2233BB" stroke-width="1.2"/><path d="M13 11l3 4" stroke="#2233BB" stroke-width="1.4"/><rect x="0" y="11" width="6" height="5" fill="#222"/><rect x="2" y="12" width="3" height="3" fill="#E02020"/></svg>
<svg style="left:864px;top:108px" width="16" height="16" viewBox="0 0 16 16"><circle cx="9" cy="7" r="5" fill="#fff" stroke="#2233BB" stroke-width="1.2"/><path d="M13 11l3 4" stroke="#2233BB" stroke-width="1.4"/><path d="M8 9l7-8" stroke="#E02020" stroke-width="2.5"/><rect x="0" y="11" width="6" height="5" fill="#222"/><rect x="2" y="12" width="3" height="3" fill="#E02020"/></svg>
<svg style="left:886px;top:108px" width="16" height="16" viewBox="0 0 16 16"><rect x="1" y="0.5" width="14" height="7" fill="#1E6FD9"/><text x="8" y="6.6" font-family="Liberation Mono" font-size="7" font-weight="bold" fill="#fff" text-anchor="middle">Dev</text><circle cx="9" cy="11" r="3.3" fill="#fff" stroke="#222" stroke-width="1.4"/><path d="M11.3 13.3l3 3" stroke="#A0522D" stroke-width="2"/></svg>
<svg style="left:908px;top:108px" width="16" height="16" viewBox="0 0 16 16"><rect x="1" y="0.5" width="14" height="7" fill="#1E6FD9"/><text x="8" y="6.6" font-family="Liberation Mono" font-size="7" font-weight="bold" fill="#fff" text-anchor="middle">Dev</text><rect x="1" y="8" width="14" height="7" fill="#1E6FD9"/><path d="M1 10h4v5" stroke="#F08A10" stroke-width="2" fill="none"/><path d="M7 14l8-7" stroke="#3DBB2A" stroke-width="3"/></svg>
<svg style="left:930px;top:108px" width="16" height="16" viewBox="0 0 16 16"><path d="M1 5h6M4 2v6" stroke="#666" stroke-width="1.6"/><path d="M7 5h7M11 5v10M6 10h5M6 14h5" stroke="#666" stroke-width="1.4"/><rect x="11" y="5" width="3" height="10" fill="#888"/></svg>
<svg style="left:952px;top:108px" width="16" height="16" viewBox="0 0 16 16"><path d="M1 5h9M4 10h7M4 14h7" stroke="#666" stroke-width="1.4"/><rect x="11" y="5" width="3" height="10" fill="#888"/></svg>
<svg style="left:977px;top:108px" width="16" height="16" viewBox="0 0 16 16"><path d="M3 2h11M5 5h9M5 8h9M5 11h9M3 14h11" stroke="#777"/></svg>
<svg style="left:999px;top:108px" width="16" height="16" viewBox="0 0 16 16"><path d="M6 2q-4 2 0 4h4M4 8h10M4 11h10M3 14h11" stroke="#777" fill="none"/></svg>
<svg style="left:1020px;top:108px" width="16" height="16" viewBox="0 0 16 16"><path d="M2 1v14M2 2h12M4 6h10M4 10h10M2 14h12M5 9l8-6" stroke="#777" fill="none"/></svg>
<svg style="left:1041px;top:108px" width="16" height="16" viewBox="0 0 16 16"><ellipse cx="9" cy="4" rx="6" ry="3" fill="#fff" stroke="#555"/><path d="M1 12h3M4 10v4M6 10v4" stroke="#555"/><rect x="8" y="9" width="8" height="7" fill="#fff" stroke="#777"/><path d="M8 11.5h8M8 14h8" stroke="#777"/></svg>
<svg style="left:1070px;top:108px" width="16" height="16" viewBox="0 0 16 16"><rect x="1" y="8" width="8" height="8" fill="#111"/><rect x="3" y="9" width="4" height="3" fill="#ddd"/><rect x="2" y="5" width="6" height="4" fill="none" stroke="#A89A20"/><path d="M5 1v6" stroke="#1B3FDF" stroke-width="2.5"/><path d="M2 4l3-4 3 4z" fill="#1B3FDF"/><path d="M9 2h7M9 5h7M9 8h7" stroke="#777" stroke-dasharray="2 1"/><path d="M12 1v8" stroke="#1B3FDF"/></svg>
<svg style="left:1091px;top:108px" width="16" height="16" viewBox="0 0 16 16"><rect x="1" y="8" width="8" height="8" fill="#111"/><rect x="3" y="9" width="4" height="3" fill="#ddd"/><rect x="2" y="5" width="6" height="4" fill="none" stroke="#A89A20"/><path d="M5 0v5" stroke="#E02020" stroke-width="2.5"/><path d="M2 4l3 4 3-4z" fill="#E02020"/><path d="M9 2h7M9 5h7M9 8h7" stroke="#777" stroke-dasharray="2 1"/><path d="M12 1v8" stroke="#1B3FDF"/></svg>
<div class="a" style="left:0;top:129px;width:296px;height:516px;background:#354A6B"></div>
<div class="a" style="left:0;top:129px;width:296px;height:23px;border-radius:0 3px 0 0;background:linear-gradient(#4B6086,#3B5076)"></div>
<div class="t" style="left:4px;top:136px;font-size:12px;color:#fff">导航</div>
<svg style="left:264px;top:134px" width="10" height="12"><path d="M2 1h6M3 1v6M7 1v6M1 7h8M5 7v5" stroke="#D0D8E6" stroke-width="1.4" fill="none"/></svg>
<svg style="left:282px;top:136px" width="9" height="9"><path d="M1 1l7 7M8 1l-7 7" stroke="#D0D8E6" stroke-width="1.6"/></svg>
<div class="a" style="left:0;top:152px;width:296px;height:30px;background:#BDC8D8;border-top:2px solid #8A8986;border-left:2px solid #8F98A6;border-right:2px solid #F4F6FA"></div>
<div class="a" style="left:2px;top:154px;width:292px;height:27px;border-radius:3px;background:#BDC8D8;box-shadow:inset 0 1px 0 #D2DAE6,inset 0 -1px 0 #D2DAE6"></div>
<div class="a" style="left:0;top:181px;width:296px;height:1px;background:#5A82BE"></div>
<div class="a" style="left:0;top:182px;width:2px;height:463px;background:#8F98A6"></div>
<div class="a" style="left:2px;top:182px;width:1px;height:463px;background:#5A82BE"></div>
<div class="a" style="left:293px;top:182px;width:3px;height:463px;background:linear-gradient(90deg,#6F90C8,#F4F6FA 60%,#F4F6FA)"></div>
<div class="sep" style="left:37px;top:158px"></div>
<div class="sep" style="left:65px;top:158px"></div>
<div class="sep" style="left:93px;top:158px"></div>
<svg style="left:9px;top:158px" width="24" height="18"><rect x="1.5" y="1.5" width="6" height="6" fill="#fff" stroke="#333"/><path d="M3 4.5h3" stroke="#111"/><path d="M7 4.5h7M9 4.5v11h5" stroke="#1C2550" fill="none"/><path d="M13 4.5v11" stroke="#CFE3F5" stroke-width="3"/><path d="M13 5l-2.5 3h5zM13 15l-2.5-3h5z" fill="#EE1111"/><path d="M13 8v4" stroke="#EE1111"/><path d="M17 7h5l-2.5 3z" fill="#3A4A66"/></svg>
<svg style="left:44px;top:158px" width="18" height="14"><rect x="0.5" y="1.5" width="6" height="6" fill="#fff" stroke="#333"/><path d="M2 4.5h3" stroke="#111"/><path d="M7 4.5h7M8 4.5v6h6" stroke="#1C2550" fill="none"/></svg>
<svg style="left:72px;top:159px" width="16" height="16" viewBox="0 0 16 16"><g fill="#333"><circle cx="8" cy="8" r="5.5"/><rect x="6.5" y="0" width="3" height="16"/><rect x="0" y="6.5" width="16" height="3"/><rect x="6.5" y="0" width="3" height="16" transform="rotate(45 8 8)"/><rect x="6.5" y="0" width="3" height="16" transform="rotate(-45 8 8)"/></g><circle cx="8" cy="8" r="2.6" fill="#C3CDDC"/></svg>
<div class="a" style="left:97px;top:156px;width:100px;height:23px;background:#fff;border:1px solid #7E8899"></div>
<div class="a" style="left:183px;top:157px;width:13px;height:21px;background:#C3CCDB"></div>
<svg style="left:186px;top:165px" width="8" height="5"><path d="M0 0h7l-3.5 4z" fill="#1F2B3F"/></svg>
<div class="t" style="left:100px;top:162px;font-size:12px">全部</div>
<div class="a" style="left:3px;top:350px;width:257px;height:20px;background:#FDF4A6"></div>
<svg style="left:6px;top:184px" width="16" height="16"><rect x="1" y="1" width="7" height="7" fill="#666"/><rect x="5" y="5" width="4" height="10" fill="#EC4A4A"/><rect x="9" y="5" width="3" height="10" fill="#ddd" stroke="#444" stroke-width=".6"/><rect x="12" y="5" width="3" height="10" fill="#444"/></svg>
<div class="t" style="left:26px;top:186px;font-size:12px;color:#fff">工程</div>
<svg style="left:20px;top:205px" width="16" height="16"><rect x="0" y="2" width="16" height="14" fill="#111"/><path d="M1 3.5h14" stroke="#fff" stroke-dasharray="1 1"/><rect x="1" y="5" width="4" height="10" fill="#F04848"/><rect x="6" y="5" width="3" height="10" fill="#A9AEB4"/><path d="M6 8.5h3M6 10.5h3M6 12.5h3" stroke="#222"/><rect x="10" y="5" width="5" height="10" fill="#1E9A3C"/><rect x="11" y="6" width="1" height="8" fill="#9AE0A0"/></svg>
<div class="t" style="left:40px;top:207px;font-size:12px;color:#fff">模块配置图</div>
<div class="a" style="left:5px;top:230px;width:9px;height:9px;background:linear-gradient(#fff,#DADFE6);border:1px solid #8D97A6"></div>
<div class="a" style="left:7px;top:234px;width:5px;height:1px;background:#2A4A9A"></div>
<svg style="left:20px;top:226px" width="16" height="16"><rect x="0" y="6" width="15" height="9" fill="#F5C542" stroke="#9A7420"/><rect x="5" y="1" width="10" height="8" fill="#8FD6F0" stroke="#333"/><rect x="5" y="9" width="10" height="3" fill="#333"/><path d="M1 5l5 5" stroke="#2EA043" stroke-width="2.5"/></svg>
<div class="t" style="left:40px;top:228px;font-size:12px;color:#fff">程序</div>
<svg style="left:34px;top:247px" width="16" height="16"><rect x="0" y="4" width="5" height="11" rx="1" fill="#F2B52E"/><rect x="1" y="5" width="2" height="8" fill="#FFE9A0"/><rect x="0" y="13" width="15" height="2" fill="#C08A1C"/><rect x="4" y="1" width="4" height="3" fill="#5A5A5A"/><rect x="4" y="4" width="4" height="10" fill="#F04848"/><rect x="8" y="1" width="4" height="13" fill="#A9AEB4"/><rect x="9" y="2" width="2" height="2" fill="#3CD23C"/><path d="M8 8.5h4M8 10.5h4M8 12.5h4" stroke="#333"/><rect x="12" y="1" width="3" height="3" fill="#333"/><rect x="12" y="4" width="3" height="10" fill="#fff"/></svg>
<div class="t" style="left:54px;top:249px;font-size:12px;color:#fff">初始</div>
<div class="a" style="left:19px;top:272px;width:9px;height:9px;background:linear-gradient(#fff,#DADFE6);border:1px solid #8D97A6"></div>
<div class="a" style="left:21px;top:276px;width:5px;height:1px;background:#2A4A9A"></div>
<svg style="left:34px;top:268px" width="16" height="16"><rect x="0" y="4" width="5" height="11" rx="1" fill="#F2B52E"/><rect x="1" y="5" width="2" height="8" fill="#FFE9A0"/><rect x="0" y="13" width="15" height="2" fill="#C08A1C"/><rect x="4" y="1" width="4" height="3" fill="#5A5A5A"/><rect x="4" y="4" width="4" height="10" fill="#F04848"/><rect x="8" y="1" width="4" height="13" fill="#A9AEB4"/><rect x="9" y="2" width="2" height="2" fill="#3CD23C"/><path d="M8 8.5h4M8 10.5h4M8 12.5h4" stroke="#333"/><rect x="12" y="1" width="3" height="3" fill="#333"/><rect x="12" y="4" width="3" height="10" fill="#fff"/></svg>
<div class="t" style="left:54px;top:270px;font-size:12px;color:#fff">扫描</div>
<div class="a" style="left:33px;top:293px;width:9px;height:9px;background:linear-gradient(#fff,#DADFE6);border:1px solid #8D97A6"></div>
<div class="a" style="left:35px;top:297px;width:5px;height:1px;background:#2A4A9A"></div>
<svg style="left:48px;top:289px" width="16" height="16"><rect x="1" y="5" width="8" height="10" fill="#E0E0E0" stroke="#333"/><rect x="3" y="3" width="5" height="5" fill="#2E8B57"/><rect x="9" y="1" width="6" height="8" fill="#fff" stroke="#444"/><path d="M11 3v4M13 3v4" stroke="#D00" stroke-width="1.4"/></svg>
<div class="t" style="left:68px;top:291px;font-size:12px;color:#fff">MAIN</div>
<div class="a" style="left:47px;top:314px;width:9px;height:9px;background:linear-gradient(#fff,#DADFE6);border:1px solid #8D97A6"></div>
<div class="a" style="left:49px;top:318px;width:5px;height:1px;background:#2A4A9A"></div>
<svg style="left:62px;top:310px" width="16" height="16"><rect x="1" y="5" width="12" height="10" fill="#F5C542" stroke="#9A7420"/><rect x="5" y="2" width="10" height="12" fill="#fff" stroke="#666"/><path d="M7 8h6M9 5v6M11 5v6" stroke="#D00" stroke-width="1.3"/></svg>
<div class="t" style="left:82px;top:312px;font-size:12px;color:#fff">ProgPou</div>
<svg style="left:76px;top:331px" width="16" height="16"><rect x="0.5" y="0.5" width="10" height="15" fill="#E8F4FA" stroke="#C8D0D8"/><rect x="1.5" y="1.5" width="8" height="11" fill="#5EC0F0"/><rect x="4" y="6" width="12" height="10" fill="#6A6AF0"/><path d="M5 7.5h2M8 7.5h7M5 10.5h2M8 10.5h7M5 13.5h2M8 13.5h7" stroke="#fff" stroke-width="1.6"/></svg>
<div class="t" style="left:96px;top:333px;font-size:12px;color:#fff">局部标签</div>
<svg style="left:76px;top:352px" width="16" height="16"><path d="M2.5 1.5h8.5l2.5 2.5v11.5h-11z" fill="#F4F7FB" stroke="#6E7A8E"/><path d="M3 9h3M10 9h3" stroke="#E00000" stroke-width="1.5"/><path d="M6 6v6M9.5 6v6" stroke="#E00000" stroke-width="1.6"/></svg>
<div class="t" style="left:96px;top:354px;font-size:12px;color:#000">程序本体</div>
<svg style="left:34px;top:373px" width="16" height="16"><rect x="0" y="4" width="5" height="11" rx="1" fill="#F2B52E"/><rect x="1" y="5" width="2" height="8" fill="#FFE9A0"/><rect x="0" y="13" width="15" height="2" fill="#C08A1C"/><rect x="4" y="1" width="4" height="3" fill="#5A5A5A"/><rect x="4" y="4" width="4" height="10" fill="#F04848"/><rect x="8" y="1" width="4" height="13" fill="#A9AEB4"/><rect x="9" y="2" width="2" height="2" fill="#3CD23C"/><path d="M8 8.5h4M8 10.5h4M8 12.5h4" stroke="#333"/><rect x="12" y="1" width="3" height="3" fill="#333"/><rect x="12" y="4" width="3" height="10" fill="#fff"/></svg>
<div class="t" style="left:54px;top:375px;font-size:12px;color:#fff">恒定周期</div>
<svg style="left:34px;top:394px" width="16" height="16"><rect x="0" y="4" width="5" height="11" rx="1" fill="#F2B52E"/><rect x="1" y="5" width="2" height="8" fill="#FFE9A0"/><rect x="0" y="13" width="15" height="2" fill="#C08A1C"/><rect x="4" y="1" width="4" height="3" fill="#5A5A5A"/><rect x="4" y="4" width="4" height="10" fill="#F04848"/><rect x="8" y="1" width="4" height="13" fill="#A9AEB4"/><rect x="9" y="2" width="2" height="2" fill="#3CD23C"/><path d="M8 8.5h4M8 10.5h4M8 12.5h4" stroke="#333"/><rect x="12" y="1" width="3" height="3" fill="#333"/><rect x="12" y="4" width="3" height="10" fill="#fff"/></svg>
<div class="t" style="left:54px;top:396px;font-size:12px;color:#fff">事件</div>
<svg style="left:34px;top:415px" width="16" height="16"><rect x="0" y="4" width="5" height="11" rx="1" fill="#F2B52E"/><rect x="1" y="5" width="2" height="8" fill="#FFE9A0"/><rect x="0" y="13" width="15" height="2" fill="#C08A1C"/><rect x="4" y="1" width="4" height="3" fill="#5A5A5A"/><rect x="4" y="4" width="4" height="10" fill="#F04848"/><rect x="8" y="1" width="4" height="13" fill="#A9AEB4"/><rect x="9" y="2" width="2" height="2" fill="#3CD23C"/><path d="M8 8.5h4M8 10.5h4M8 12.5h4" stroke="#333"/><rect x="12" y="1" width="3" height="3" fill="#333"/><rect x="12" y="4" width="3" height="10" fill="#fff"/></svg>
<div class="t" style="left:54px;top:417px;font-size:12px;color:#fff">待机</div>
<svg style="left:34px;top:436px" width="16" height="16"><rect x="0" y="4" width="5" height="11" rx="1" fill="#F2B52E"/><rect x="1" y="5" width="2" height="8" fill="#FFE9A0"/><rect x="0" y="13" width="15" height="2" fill="#C08A1C"/><rect x="4" y="1" width="4" height="3" fill="#5A5A5A"/><rect x="4" y="4" width="4" height="10" fill="#F04848"/><rect x="8" y="1" width="4" height="13" fill="#A9AEB4"/><rect x="9" y="2" width="2" height="2" fill="#3CD23C"/><path d="M8 8.5h4M8 10.5h4M8 12.5h4" stroke="#333"/><rect x="12" y="1" width="3" height="3" fill="#333"/><rect x="12" y="4" width="3" height="10" fill="#fff"/></svg>
<div class="t" style="left:54px;top:438px;font-size:12px;color:#fff">无执行类型指定</div>
<svg style="left:34px;top:457px" width="16" height="16"><rect x="0" y="5" width="5" height="10" rx="1" fill="#F2B52E"/><rect x="0" y="13" width="15" height="2" fill="#C08A1C"/><rect x="4" y="1" width="9" height="13" fill="#fff" stroke="#888"/><rect x="6" y="3" width="9" height="11" fill="#F0F0F0" stroke="#888"/><path d="M8 6h5M8 8h5M8 10h5" stroke="#999"/></svg>
<div class="t" style="left:54px;top:459px;font-size:12px;color:#fff">未登录程序</div>
<svg style="left:20px;top:478px" width="16" height="16"><rect x="0" y="5" width="5" height="10" rx="1" fill="#F2B52E"/><rect x="0" y="13" width="15" height="2" fill="#C08A1C"/><rect x="3" y="4" width="12" height="10" fill="#2E9B66"/><rect x="4" y="2" width="10" height="5" fill="#6FB3F7"/><rect x="5" y="9" width="8" height="4" fill="#F8E060"/></svg>
<div class="t" style="left:40px;top:480px;font-size:12px;color:#fff">FB/FUN</div>
<div class="a" style="left:5px;top:503px;width:9px;height:9px;background:linear-gradient(#fff,#DADFE6);border:1px solid #8D97A6"></div>
<div class="a" style="left:7px;top:507px;width:5px;height:1px;background:#2A4A9A"></div>
<svg style="left:20px;top:499px" width="16" height="16"><rect x="0" y="5" width="5" height="10" rx="1" fill="#F2B52E"/><rect x="0" y="13" width="15" height="2" fill="#C08A1C"/><circle cx="8" cy="6" r="5" fill="#2F8ED8"/><path d="M5 3q2 2 1 5M9 2q0 3 3 4" stroke="#3DB84A" stroke-width="2" fill="none"/><rect x="5" y="7" width="10" height="8" fill="#fff" stroke="#3344DD"/><path d="M5 9.5h10M5 12h10M8 7v8" stroke="#3344DD"/></svg>
<div class="t" style="left:40px;top:501px;font-size:12px;color:#fff">标签</div>
<div class="a" style="left:19px;top:524px;width:9px;height:9px;background:linear-gradient(#fff,#DADFE6);border:1px solid #8D97A6"></div>
<div class="a" style="left:21px;top:528px;width:5px;height:1px;background:#2A4A9A"></div>
<svg style="left:34px;top:520px" width="16" height="16"><rect x="0" y="5" width="5" height="10" rx="1" fill="#F2B52E"/><rect x="0" y="13" width="15" height="2" fill="#C08A1C"/><circle cx="8" cy="6" r="5" fill="#2F8ED8"/><path d="M5 3q2 2 1 5M9 2q0 3 3 4" stroke="#3DB84A" stroke-width="2" fill="none"/><rect x="5" y="7" width="10" height="8" fill="#fff" stroke="#3344DD"/><path d="M5 9.5h10M5 12h10M8 7v8" stroke="#3344DD"/></svg>
<div class="t" style="left:54px;top:522px;font-size:12px;color:#fff">全局标签</div>
<svg style="left:48px;top:541px" width="16" height="16"><circle cx="6.5" cy="6.5" r="6" fill="#1E78D8"/><path d="M2 5q2-4 6-3q1 3-2 5q-2 0-4-2z" fill="#5CD02A"/><path d="M10 2q3 2 2.5 5l-2-1z" fill="#1A9A30"/><rect x="4" y="6.5" width="11" height="9.5" fill="#5A5AF0"/><path d="M5 8h2M8 8h6M5 11h2M8 11h6M5 14h2M8 14h6" stroke="#fff" stroke-width="1.6"/></svg>
<div class="t" style="left:68px;top:543px;font-size:12px;color:#fff">Global</div>
<svg style="left:34px;top:562px" width="16" height="16"><rect x="0" y="5" width="5" height="10" rx="1" fill="#F2B52E"/><rect x="0" y="13" width="15" height="2" fill="#C08A1C"/><rect x="4" y="2" width="11" height="12" fill="#F8F0B0" stroke="#8A6A20"/><rect x="6" y="3" width="2" height="10" fill="#111"/><rect x="9" y="3" width="4" height="3" fill="#E03030"/><rect x="9" y="6" width="4" height="3" fill="#30B030"/><rect x="9" y="9" width="4" height="3" fill="#E8E030"/></svg>
<div class="t" style="left:54px;top:564px;font-size:12px;color:#fff">结构体</div>
<div class="a" style="left:5px;top:587px;width:9px;height:9px;background:linear-gradient(#fff,#DADFE6);border:1px solid #8D97A6"></div>
<div class="a" style="left:7px;top:591px;width:5px;height:1px;background:#2A4A9A"></div>
<div class="a" style="left:9px;top:589px;width:1px;height:5px;background:#2A4A9A"></div>
<svg style="left:20px;top:583px" width="16" height="16"><rect x="0" y="4" width="16" height="12" rx="1" fill="#F2C040" stroke="#B08020"/><circle cx="5" cy="5" r="3" fill="#F08080"/><circle cx="11" cy="5" r="3" fill="#80D080"/><rect x="2" y="8" width="12" height="6" fill="#F8E8A0"/></svg>
<div class="t" style="left:40px;top:585px;font-size:12px;color:#fff">软元件</div>
<div class="a" style="left:5px;top:608px;width:9px;height:9px;background:linear-gradient(#fff,#DADFE6);border:1px solid #8D97A6"></div>
<div class="a" style="left:7px;top:612px;width:5px;height:1px;background:#2A4A9A"></div>
<div class="a" style="left:9px;top:610px;width:1px;height:5px;background:#2A4A9A"></div>
<svg style="left:20px;top:604px" width="16" height="16"><rect x="0" y="5" width="5" height="10" rx="1" fill="#F2B52E"/><rect x="0" y="13" width="15" height="2" fill="#C08A1C"/><rect x="3" y="2" width="7" height="12" fill="#555"/><rect x="4" y="3" width="5" height="3" fill="#ddd"/><path d="M14 2l-8 12" stroke="#1B3FDF" stroke-width="2"/></svg>
<div class="t" style="left:40px;top:606px;font-size:12px;color:#fff">参数</div>
<div class="a" style="left:296px;top:129px;width:920px;height:24px;background:#2B3B5B"></div>
<svg style="left:296px;top:130px" width="920" height="22"><defs><pattern id="dp" width="4" height="4" patternUnits="userSpaceOnUse"><rect x="0" y="1" width="1" height="1" fill="#3B4E6F"/><rect x="2" y="3" width="1" height="1" fill="#3B4E6F"/></pattern></defs><rect width="920" height="22" fill="url(#dp)"/></svg>
<div class="a" style="left:296px;top:129px;width:920px;height:1px;background:#1E2D4C"></div>
<svg style="left:306px;top:133px" width="16" height="16"><rect x="0.5" y="0.5" width="10" height="15" fill="#E8F4FA" stroke="#C8D0D8"/><rect x="1.5" y="1.5" width="8" height="11" fill="#5EC0F0"/><rect x="4" y="6" width="12" height="10" fill="#6A6AF0"/><path d="M5 7.5h2M8 7.5h7M5 10.5h2M8 10.5h7M5 13.5h2M8 13.5h7" stroke="#fff" stroke-width="1.6"/></svg>
<div class="t" style="left:325px;top:135px;font-size:12.5px;color:#fff">ProgPou [PRG] [局部标签设置]</div>
<div class="a" style="left:518px;top:129px;width:186px;height:24px;border-radius:2px 2px 0 0;background:linear-gradient(#FFFCEB,#FCE7AE)"></div>
<svg style="left:523px;top:133px" width="16" height="16"><path d="M2.5 1.5h8.5l2.5 2.5v11.5h-11z" fill="#F4F7FB" stroke="#6E7A8E"/><path d="M3 9h3M10 9h3" stroke="#E00000" stroke-width="1.5"/><path d="M6 6v6M9.5 6v6" stroke="#E00000" stroke-width="1.6"/></svg>
<div class="t" style="left:542px;top:135px;font-size:12.5px;color:#000">ProgPou [PRG] [LD] 49步</div>
<svg style="left:691px;top:136px" width="9" height="9"><path d="M1 1l7 7M8 1l-7 7" stroke="#555" stroke-width="1.2"/></svg>
<svg style="left:709px;top:132px" width="16" height="16"><circle cx="6.5" cy="6.5" r="6" fill="#1E78D8"/><path d="M2 5q2-4 6-3q1 3-2 5q-2 0-4-2z" fill="#5CD02A"/><path d="M10 2q3 2 2.5 5l-2-1z" fill="#1A9A30"/><rect x="4" y="6.5" width="11" height="9.5" fill="#5A5AF0"/><path d="M5 8h2M8 8h6M5 11h2M8 11h6M5 14h2M8 14h6" stroke="#fff" stroke-width="1.6"/></svg>
<div class="t" style="left:728px;top:135px;font-size:12.5px;color:#fff">Global [全局标签设置]</div>
<div class="a" style="left:296px;top:152px;width:6px;height:493px;background:#2B3B5B"></div>
<div class="a" style="left:301px;top:152px;width:915px;height:493px;background:#FBE7AE"></div>
<div class="a" style="left:302px;top:154px;width:914px;height:491px;background:#8E8E8E;border-top:2px solid #7A7A7A;border-left:1px solid #BDBDBD"></div>
<div class="a" style="left:306px;top:159px;width:910px;height:486px;background:#fff"></div>
<div class="a" style="left:306px;top:159px;width:98px;height:21px;background:linear-gradient(#F4F8FE,#DDE9FB)"></div>
<div class="a" style="left:404px;top:159px;width:804px;height:21px;background:linear-gradient(#FAFCFF,#D2E2F9);border-bottom:1px solid #6F9BD6;border-right:1px solid #6F9BD6"></div>
<div class="vdot a" style="left:362px;top:159px;height:20px;background-image:linear-gradient(#fff 50%,transparent 50%)"></div>
<div class="t" style="left:309px;top:163px;font-size:12.5px">写入</div>
<svg style="left:391px;top:168px" width="7" height="4"><path d="M0 0h6l-3 3z" fill="#4A6FA8"/></svg>
<div class="t" style="left:404px;top:163px;width:67px;text-align:center;font-size:12.5px">1</div>
<div class="a" style="left:470px;top:159px;width:1px;height:20px;background:#7CA3DA"></div>
<div class="t" style="left:471px;top:163px;width:67px;text-align:center;font-size:12.5px">2</div>
<div class="a" style="left:537px;top:159px;width:1px;height:20px;background:#7CA3DA"></div>
<div class="t" style="left:538px;top:163px;width:67px;text-align:center;font-size:12.5px">3</div>
<div class="a" style="left:604px;top:159px;width:1px;height:20px;background:#7CA3DA"></div>
<div class="t" style="left:605px;top:163px;width:67px;text-align:center;font-size:12.5px">4</div>
<div class="a" style="left:671px;top:159px;width:1px;height:20px;background:#7CA3DA"></div>
<div class="t" style="left:672px;top:163px;width:67px;text-align:center;font-size:12.5px">5</div>
<div class="a" style="left:738px;top:159px;width:1px;height:20px;background:#7CA3DA"></div>
<div class="t" style="left:739px;top:163px;width:67px;text-align:center;font-size:12.5px">6</div>
<div class="a" style="left:805px;top:159px;width:1px;height:20px;background:#7CA3DA"></div>
<div class="t" style="left:806px;top:163px;width:67px;text-align:center;font-size:12.5px">7</div>
<div class="a" style="left:872px;top:159px;width:1px;height:20px;background:#7CA3DA"></div>
<div class="t" style="left:873px;top:163px;width:67px;text-align:center;font-size:12.5px">8</div>
<div class="a" style="left:939px;top:159px;width:1px;height:20px;background:#7CA3DA"></div>
<div class="t" style="left:940px;top:163px;width:67px;text-align:center;font-size:12.5px">9</div>
<div class="a" style="left:1006px;top:159px;width:1px;height:20px;background:#7CA3DA"></div>
<div class="t" style="left:1007px;top:163px;width:67px;text-align:center;font-size:12.5px">10</div>
<div class="a" style="left:1073px;top:159px;width:1px;height:20px;background:#7CA3DA"></div>
<div class="t" style="left:1074px;top:163px;width:67px;text-align:center;font-size:12.5px">11</div>
<div class="a" style="left:1140px;top:159px;width:1px;height:20px;background:#7CA3DA"></div>
<div class="t" style="left:1141px;top:163px;width:67px;text-align:center;font-size:12.5px">12</div>
<div class="a" style="left:306px;top:180px;width:16px;height:15px;background:linear-gradient(#F2F7FE,#D6E5FA);border-right:1px solid #6F9BD6;border-bottom:1px solid #6F9BD6"></div>
<div class="t" style="left:309px;top:182px;font-size:12.5px">1</div>
<div class="a" style="left:306px;top:195px;width:16px;height:200px;background:linear-gradient(#E2EDFC,#C9DDF9);border-right:1px solid #6F9BD6;border-bottom:1px solid #6F9BD6"></div>
<div class="t" style="left:309px;top:290px;font-size:12.5px">2</div>
<div class="a" style="left:306px;top:395px;width:16px;height:43px;background:linear-gradient(#FBFDFF,#C8DCF8);border-right:1px solid #6F9BD6;border-bottom:1px solid #6F9BD6"></div>
<div class="t" style="left:309px;top:411px;font-size:12.5px">3</div>
<div class="a" style="left:363px;top:180px;width:40px;height:214px;background:#ADD8E6"></div>
<div class="a dot" style="left:322px;top:194px;width:886px"></div>
<div class="a dot" style="left:322px;top:394px;width:886px"></div>
<div class="a dot" style="left:322px;top:437px;width:886px"></div>
<div class="a vdot" style="left:470px;top:180px;height:258px"></div>
<div class="a vdot" style="left:537px;top:180px;height:258px"></div>
<div class="a vdot" style="left:604px;top:180px;height:258px"></div>
<div class="a vdot" style="left:671px;top:180px;height:258px"></div>
<div class="a vdot" style="left:738px;top:180px;height:258px"></div>
<div class="a vdot" style="left:805px;top:180px;height:258px"></div>
<div class="a vdot" style="left:872px;top:180px;height:258px"></div>
<div class="a vdot" style="left:939px;top:180px;height:258px"></div>
<div class="a vdot" style="left:1006px;top:180px;height:258px"></div>
<div class="a vdot" style="left:1073px;top:180px;height:258px"></div>
<div class="a vdot" style="left:1140px;top:180px;height:258px"></div>
<div class="a vdot" style="left:1207px;top:180px;height:258px"></div>
<div class="a vdot" style="left:362px;top:180px;height:258px"></div>
<div class="t" style="left:363px;top:181px;width:39px;text-align:right;font-size:12.5px">(0)</div>
<div class="t" style="left:363px;top:289px;width:39px;text-align:right;font-size:12.5px">(0)</div>
<div class="t" style="left:363px;top:410px;width:39px;text-align:right;font-size:12.5px">(48)</div>
<div class="a" style="left:404px;top:180px;width:1px;height:258px;background:#000"></div>
<div class="a" style="left:1206px;top:395px;width:1px;height:43px;background:#000"></div>
<div class="a" style="left:405px;top:214px;width:27px;height:1px;background:#000"></div>
<div class="a" style="left:431px;top:208px;width:1px;height:13px;background:#000"></div>
<div class="a" style="left:443px;top:208px;width:1px;height:13px;background:#000"></div>
<div class="a" style="left:444px;top:214px;width:228px;height:1px;background:#000"></div>
<div class="t" style="left:420px;top:195px;font-size:11.5px;color:#333">SM400</div>
<div class="a" style="left:405px;top:414px;width:750px;height:1px;background:#000"></div>
<div class="a" style="left:1193px;top:414px;width:14px;height:1px;background:#000"></div>
<svg style="left:1150px;top:408px" width="50" height="14" shape-rendering="crispEdges"><path d="M5.5 2v9M5.5 2.5h2M5.5 10.5h2M43.5 2v9M43.5 2.5h-2M43.5 10.5h-2" stroke="#000" fill="none"/></svg>
<div class="t" style="left:1158px;top:409px;font-size:11.5px;color:#111">END</div>
<div class="a" style="left:672px;top:180px;width:536px;height:14px;background:#A0FFFF;border:1px solid #008000"></div>
<div class="a" style="left:672px;top:195px;width:536px;height:199px;background:#fff;border:2px solid #0010B4"></div>
<div class="a" style="left:674px;top:197px;width:532px;height:195px;border:1px solid #C4C0B4"></div>
<div class="a" style="left:675px;top:198px;width:22px;height:177px;background:#F0F0F0"></div>
<div class="a" style="left:708px;top:198px;width:1px;height:175px;background-image:linear-gradient(#118811 50%,transparent 50%);background-size:1px 2px"></div>
<div class="a" style="left:709px;top:198px;width:3px;height:68px;background:#F7D330"></div>
<div class="a" style="left:1188px;top:198px;width:17px;height:177px;background:#EDEDED"></div>
<svg style="left:1192px;top:203px" width="9" height="5"><path d="M0 4.5L4.5 0 9 4.5z" fill="#8A8A8A"/></svg>
<svg style="left:1192px;top:363px" width="9" height="5"><path d="M0 0L4.5 4.5 9 0z" fill="#8A8A8A"/></svg>
<div class="a" style="left:675px;top:375px;width:513px;height:16px;background:#EDEDED"></div>
<div class="a" style="left:1188px;top:375px;width:17px;height:16px;background:#EFEFEF"></div>
<svg style="left:681px;top:379px" width="5" height="9"><path d="M4.5 0L0 4.5 4.5 9z" fill="#8A8A8A"/></svg>
<svg style="left:1177px;top:379px" width="5" height="9"><path d="M0 0L4.5 4.5 0 9z" fill="#8A8A8A"/></svg>
<div class="t" style="left:699px;top:203px;width:8px;text-align:right;font-family:'Liberation Mono',monospace;font-size:9.5px;color:#007A00">1</div>
<div class="t" style="left:723px;top:203px;font-family:'Liberation Mono',monospace;font-size:9.5px;letter-spacing:0"><span style="display:inline-block;width:12px;color:#FF00FF;font-size:10px;font-weight:bold;letter-spacing:0">字</span><span style="display:inline-block;width:12px;color:#FF00FF;font-size:10px;font-weight:bold;letter-spacing:0">符</span><span style="display:inline-block;width:12px;color:#FF00FF;font-size:10px;font-weight:bold;letter-spacing:0">串</span><span style="display:inline-block;width:6px;color:#FF00FF">1</span><span style="display:inline-block;width:6px;color:#2A2A2A">:</span><span style="display:inline-block;width:6px;color:#2A2A2A">=</span><span style="display:inline-block;width:6px"></span><span style="display:inline-block;width:6px;color:#2A2A2A">'</span><span style="display:inline-block;width:6px;color:#2A2A2A">A</span><span style="display:inline-block;width:6px;color:#2A2A2A">A</span><span style="display:inline-block;width:6px;color:#2A2A2A">A</span><span style="display:inline-block;width:6px;color:#2A2A2A">A</span><span style="display:inline-block;width:6px;color:#2A2A2A">'</span><span style="display:inline-block;width:6px;color:#2A2A2A">;</span></div>
<div class="t" style="left:699px;top:220px;width:8px;text-align:right;font-family:'Liberation Mono',monospace;font-size:9.5px;color:#007A00">2</div>
<div class="t" style="left:723px;top:220px;font-family:'Liberation Mono',monospace;font-size:9.5px;letter-spacing:0"><span style="display:inline-block;width:12px;color:#FF00FF;font-size:10px;font-weight:bold;letter-spacing:0">字</span><span style="display:inline-block;width:12px;color:#FF00FF;font-size:10px;font-weight:bold;letter-spacing:0">符</span><span style="display:inline-block;width:12px;color:#FF00FF;font-size:10px;font-weight:bold;letter-spacing:0">串</span><span style="display:inline-block;width:6px;color:#FF00FF">2</span><span style="display:inline-block;width:6px;color:#2A2A2A">:</span><span style="display:inline-block;width:6px;color:#2A2A2A">=</span><span style="display:inline-block;width:6px"></span><span style="display:inline-block;width:6px;color:#2A2A2A">'</span><span style="display:inline-block;width:6px;color:#2A2A2A">A</span><span style="display:inline-block;width:6px;color:#2A2A2A">A</span><span style="display:inline-block;width:6px;color:#2A2A2A">A</span><span style="display:inline-block;width:6px;color:#2A2A2A">A</span><span style="display:inline-block;width:6px;color:#2A2A2A">'</span><span style="display:inline-block;width:6px;color:#2A2A2A">;</span></div>
<div class="t" style="left:699px;top:237px;width:8px;text-align:right;font-family:'Liberation Mono',monospace;font-size:9.5px;color:#007A00">3</div>
<div class="t" style="left:723px;top:237px;font-family:'Liberation Mono',monospace;font-size:9.5px;letter-spacing:0"><span style="display:inline-block;width:6px;color:#0000FF">I</span><span style="display:inline-block;width:6px;color:#0000FF">F</span><span style="display:inline-block;width:6px"></span><span style="display:inline-block;width:12px;color:#FF00FF;font-size:10px;font-weight:bold;letter-spacing:0">字</span><span style="display:inline-block;width:12px;color:#FF00FF;font-size:10px;font-weight:bold;letter-spacing:0">符</span><span style="display:inline-block;width:12px;color:#FF00FF;font-size:10px;font-weight:bold;letter-spacing:0">串</span><span style="display:inline-block;width:6px;color:#FF00FF">1</span><span style="display:inline-block;width:6px;color:#2A2A2A">=</span><span style="display:inline-block;width:12px;color:#FF00FF;font-size:10px;font-weight:bold;letter-spacing:0">字</span><span style="display:inline-block;width:12px;color:#FF00FF;font-size:10px;font-weight:bold;letter-spacing:0">符</span><span style="display:inline-block;width:12px;color:#FF00FF;font-size:10px;font-weight:bold;letter-spacing:0">串</span><span style="display:inline-block;width:6px;color:#FF00FF">2</span><span style="display:inline-block;width:6px"></span><span style="display:inline-block;width:6px;color:#0000FF">T</span><span style="display:inline-block;width:6px;color:#0000FF">H</span><span style="display:inline-block;width:6px;color:#0000FF">E</span><span style="display:inline-block;width:6px;color:#0000FF">N</span><span style="display:inline-block;width:6px;color:#2A2A2A">;</span></div>
<div class="t" style="left:699px;top:254px;width:8px;text-align:right;font-family:'Liberation Mono',monospace;font-size:9.5px;color:#007A00">4</div>
<div class="t" style="left:723px;top:254px;font-family:'Liberation Mono',monospace;font-size:9.5px;letter-spacing:0"><span style="display:inline-block;width:6px"></span><span style="display:inline-block;width:6px"></span><span style="display:inline-block;width:6px"></span><span style="display:inline-block;width:6px"></span><span style="display:inline-block;width:6px;color:#0000FF">E</span><span style="display:inline-block;width:6px;color:#0000FF">N</span><span style="display:inline-block;width:6px;color:#0000FF">D</span><span style="display:inline-block;width:6px;color:#0000FF">_</span><span style="display:inline-block;width:6px;color:#0000FF">I</span><span style="display:inline-block;width:6px;color:#0000FF">F</span><span style="display:inline-block;width:6px;color:#2A2A2A">;</span></div>
<div class="a" style="left:713px;top:236px;width:9px;height:9px;border:1px solid #777;background:#fff"></div>
<div class="a" style="left:715px;top:240px;width:5px;height:1px;background:#555"></div>
<div class="a" style="left:717px;top:246px;width:1px;height:19px;background:#888"></div>
<div class="a" style="left:717px;top:265px;width:5px;height:1px;background:#888"></div>
</body></html>
